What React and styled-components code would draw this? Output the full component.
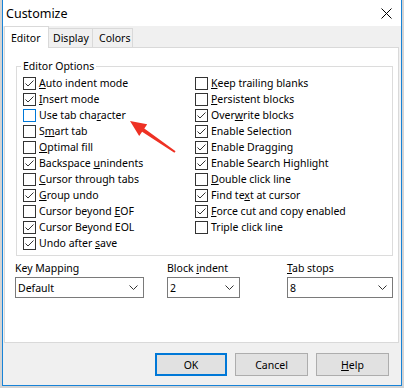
import React from "react";
import styled, { createGlobalStyle } from "styled-components";

const GlobalStyle = createGlobalStyle`
  html, body { margin: 0; padding: 0; }
  body {
    background: #d4d4d4;
    font-family: "Noto Sans", "DejaVu Sans", sans-serif;
    font-size: 10.5px;
    color: #000;
    width: 404px;
    height: 388px;
    overflow: hidden;
  }
`;

const Stage = styled.div`
  position: relative;
  width: 404px;
  height: 388px;
  padding-left: 2px;
  box-sizing: border-box;
`;

const Window = styled.div`
  width: 400px;
  height: 386px;
  box-sizing: border-box;
  border: 1px solid #1883d7;
  border-top: none;
  background: #f0f0f0;
  display: flex;
  flex-direction: column;
`;

const TitleBar = styled.div`
  height: 26px;
  flex: none;
  background: #fff;
  display: flex;
  align-items: center;
  justify-content: space-between;
  padding: 0 9px 0 3px;
`;

const Title = styled.div`
  font-size: 12.5px;
  line-height: 18px;
  padding-top: 1px;
`;

const Body = styled.div`
  flex: 1;
  display: flex;
  flex-direction: column;
  padding: 0 2px 0 1px;
`;

const TabStrip = styled.div`
  height: 21px;
  display: flex;
  align-items: flex-end;
`;

const Tab = styled.div`
  box-sizing: border-box;
  width: ${(p) => p.$w}px;
  height: ${(p) => (p.$active ? 22 : 19)}px;
  margin-bottom: ${(p) => (p.$active ? -1 : 0)}px;
  margin-left: ${(p) => (p.$first ? 0 : -1)}px;
  border: 1px solid #d9d9d9;
  border-bottom: none;
  background: ${(p) => (p.$active ? "#fff" : "#f0f0f0")};
  position: relative;
  z-index: ${(p) => (p.$active ? 2 : 1)};
  display: flex;
  align-items: center;
  padding-left: ${(p) => p.$pl}px;
  line-height: 14px;
`;

const Panel = styled.div`
  box-sizing: border-box;
  height: 296px;
  background: #fff;
  border: 1px solid #d9d9d9;
  padding: 0 5px 0 10px;
  display: flex;
  flex-direction: column;
`;

const Group = styled.fieldset`
  margin: 11px 0 0 1px;
  padding: 2px 0 4px 6px;
  border: 1px solid #dcdcdc;
  display: grid;
  grid-template-columns: 172px 1fr;
`;

const Legend = styled.legend`
  padding: 0 2px;
  margin-left: -2px;
  line-height: 14px;
`;

const Column = styled.div`
  display: flex;
  flex-direction: column;
`;

const Row = styled.label`
  height: 16px;
  display: flex;
  align-items: center;
  gap: 3px;
  white-space: nowrap;
  line-height: 14px;
`;

const Box = styled.span`
  box-sizing: border-box;
  width: 13px;
  height: 13px;
  flex: none;
  border: 1px solid ${(p) => (p.$hover ? "#0078d7" : "#333")};
  background: #fff;
  display: flex;
  align-items: center;
  justify-content: center;
`;

const U = styled.span`
  text-decoration: underline;
  text-underline-offset: 1px;
`;

const Fields = styled.div`
  display: flex;
  margin-top: 5px;
`;

const Field = styled.div`
  width: ${(p) => p.$w}px;
  margin-left: ${(p) => p.$ml}px;
  display: flex;
  flex-direction: column;
  gap: 2px;
`;

const FieldLabel = styled.div`
  line-height: 14px;
  white-space: nowrap;
`;

const Select = styled.div`
  box-sizing: border-box;
  height: 21px;
  border: 1px solid #7a7a7a;
  background: #fff;
  display: flex;
  align-items: center;
  justify-content: space-between;
  padding: 0 5px 0 2px;
`;

const Buttons = styled.div`
  display: flex;
  justify-content: flex-end;
  gap: 8px;
  margin-top: 10px;
  padding-right: 10px;
`;

const Button = styled.div`
  box-sizing: border-box;
  width: ${(p) => p.$w}px;
  height: 23px;
  background: #e1e1e1;
  border: ${(p) => (p.$default ? "2px solid #0078d7" : "1px solid #adadad")};
  display: flex;
  align-items: center;
  justify-content: center;
  line-height: 14px;
`;

const Arrow = styled.svg`
  position: absolute;
  left: 0;
  top: 0;
  pointer-events: none;
`;

const Check = () => (
  <svg width="11" height="11" viewBox="0 0 11 11">
    <path d="M1.5 5.5 L4 8 L9.5 2.5" fill="none" stroke="#333" strokeWidth="1" />
  </svg>
);

const Chevron = () => (
  <svg width="9" height="5" viewBox="0 0 9 5">
    <path d="M0.5 0.5 L4.5 4.5 L8.5 0.5" fill="none" stroke="#333" strokeWidth="1" />
  </svg>
);

const CloseX = () => (
  <svg width="11" height="11" viewBox="0 0 11 11">
    <path d="M0.5 0.5 L10.5 10.5 M10.5 0.5 L0.5 10.5" stroke="#000" strokeWidth="1" />
  </svg>
);

// label parts: [before, underlined, after]
const left = [
  { t: ["", "A", "uto indent mode"], c: true },
  { t: ["", "I", "nsert mode"], c: true },
  { t: ["Use tab cha", "r", "acter"], c: false, h: true },
  { t: ["S", "m", "art tab"], c: false },
  { t: ["", "O", "ptimal fill"], c: false },
  { t: ["Backspace ", "u", "nindents"], c: true },
  { t: ["", "C", "ursor through tabs"], c: false },
  { t: ["", "G", "roup undo"], c: true },
  { t: ["Cursor beyond ", "E", "OF"], c: false },
  { t: ["Cursor Beyond EOL", "", ""], c: true },
  { t: ["Undo after ", "s", "ave"], c: true },
];

const right = [
  { t: ["", "K", "eep trailing blanks"], c: false },
  { t: ["", "P", "ersistent blocks"], c: false },
  { t: ["Over", "w", "rite blocks"], c: true },
  { t: ["Enable Selection", "", ""], c: true },
  { t: ["Enable Dragging", "", ""], c: true },
  { t: ["Enable Search Highlight", "", ""], c: true },
  { t: ["", "D", "ouble click line"], c: false },
  { t: ["Find te", "x", "t at cursor"], c: true },
  { t: ["", "F", "orce cut and copy enabled"], c: true },
  { t: ["Triple click line", "", ""], c: false },
];

const Option = ({ item }) => (
  <Row>
    <Box $hover={item.h}>{item.c && <Check />}</Box>
    <span>
      {item.t[0]}
      {item.t[1] && <U>{item.t[1]}</U>}
      {item.t[2]}
    </span>
  </Row>
);

export default function App() {
  return (
    <Stage>
      <GlobalStyle />
      <Window>
        <TitleBar>
          <Title>Customize</Title>
          <CloseX />
        </TitleBar>
        <Body>
          <TabStrip>
            <Tab $active $first $w={45} $pl={6}>Editor</Tab>
            <Tab $w={45} $pl={4}>Display</Tab>
            <Tab $w={41} $pl={6}>Colors</Tab>
          </TabStrip>
          <Panel>
            <Group>
              <Legend>Editor Options</Legend>
              <Column>
                {left.map((it, i) => (
                  <Option key={i} item={it} />
                ))}
              </Column>
              <Column>
                {right.map((it, i) => (
                  <Option key={i} item={it} />
                ))}
              </Column>
            </Group>
            <Fields>
              <Field $w={129} $ml={0}>
                <FieldLabel>Key Mapping</FieldLabel>
                <Select>
                  <span>Default</span>
                  <Chevron />
                </Select>
              </Field>
              <Field $w={73} $ml={23}>
                <FieldLabel>
                  Block <U>i</U>ndent
                </FieldLabel>
                <Select>
                  <span>2</span>
                  <Chevron />
                </Select>
              </Field>
              <Field $w={106} $ml={47}>
                <FieldLabel>
                  <U>T</U>ab stops
                </FieldLabel>
                <Select>
                  <span>8</span>
                  <Chevron />
                </Select>
              </Field>
            </Fields>
          </Panel>
          <Buttons>
            <Button $default $w={72}>OK</Button>
            <Button $w={73}>Cancel</Button>
            <Button $w={73}>
              <span>
                <U>H</U>elp
              </span>
            </Button>
          </Buttons>
        </Body>
      </Window>
      <Arrow width="404" height="388" viewBox="0 0 404 388">
        <polygon
          points="130,121 147.2,124.3 144.3,128.5 175.6,151.2 174.4,152.8 142.1,131.7 139.2,135.9"
          fill="#ee3124"
        />
      </Arrow>
    </Stage>
  );
}
